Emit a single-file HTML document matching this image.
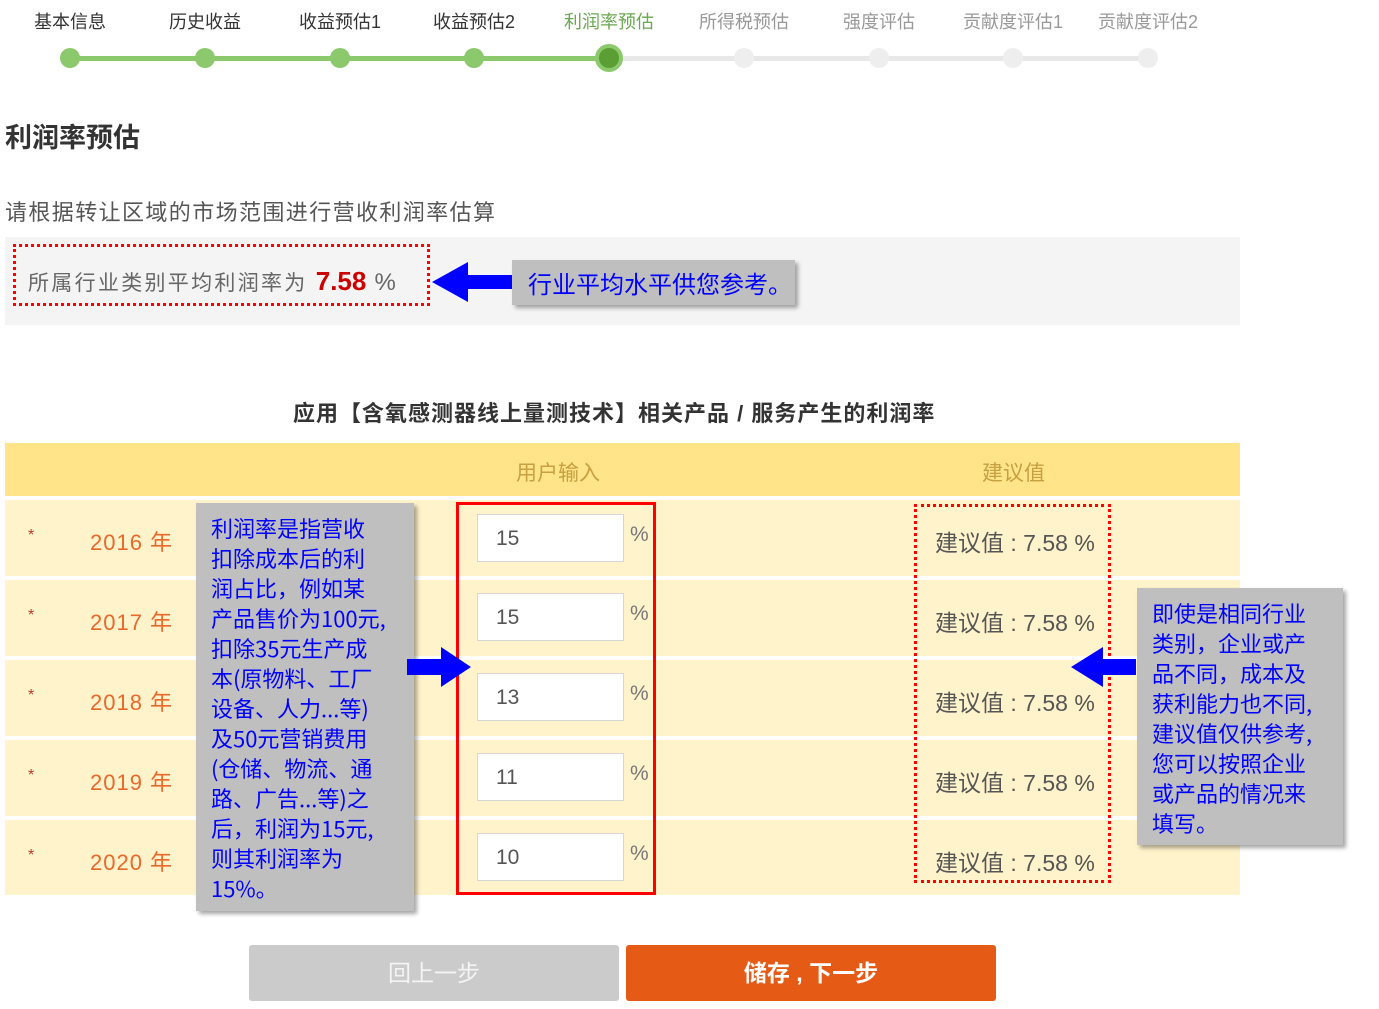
<!DOCTYPE html>
<html><head><meta charset="utf-8"><style>
*{margin:0;padding:0;box-sizing:border-box}
body{width:1379px;height:1009px;background:#fff;position:relative;overflow:hidden;font-family:"Liberation Sans","Noto Sans CJK SC",sans-serif}
.a{position:absolute}
.lab{position:absolute;top:8px;font-size:18px;color:#333;white-space:nowrap;transform:translateX(-50%)}
.dot{position:absolute;top:48px;width:20px;height:20px;border-radius:50%;margin-left:-10px}
.row{position:absolute;left:5px;width:1235px;height:76px;background:#fff3cc}
.yr{position:absolute;left:90px;font-size:22px;color:#e8692a;letter-spacing:1px}
.st{position:absolute;left:28px;font-size:16px;color:#c0392b}
.inp{position:absolute;left:477px;width:147px;height:48px;background:#fff;border:1px solid #d6d6d6;font-size:21px;color:#555;padding:12px 0 0 18px}
.pc{position:absolute;left:630px;font-size:21px;color:#777}
.sug{position:absolute;left:935px;font-size:23px;color:#555;white-space:nowrap}
.call{position:absolute;background:#bfbfbf;color:#0000ff;font-family:"Noto Sans CJK SC","WenQuanYi Zen Hei",sans-serif;box-shadow:3px 3px 4px rgba(0,0,0,.35)}
</style></head><body>
<div class="a" style="left:70px;top:56px;width:540px;height:5px;background:#8cc96c"></div>
<div class="a" style="left:610px;top:56px;width:540px;height:5px;background:#e8e8e8"></div>
<div class="dot" style="left:70px;background:#8cc96c"></div>
<div class="dot" style="left:205px;background:#8cc96c"></div>
<div class="dot" style="left:340px;background:#8cc96c"></div>
<div class="dot" style="left:474px;background:#8cc96c"></div>
<div class="a" style="left:595px;top:44px;width:28px;height:28px;border-radius:50%;background:#5a9e34;border:4px solid #8cc96c"></div>
<div class="dot" style="left:744px;background:#eee"></div>
<div class="dot" style="left:879px;background:#eee"></div>
<div class="dot" style="left:1013px;background:#eee"></div>
<div class="dot" style="left:1148px;background:#eee"></div>
<div class="lab" style="left:70px">基本信息</div>
<div class="lab" style="left:205px">历史收益</div>
<div class="lab" style="left:340px">收益预估1</div>
<div class="lab" style="left:474px">收益预估2</div>
<div class="lab" style="left:609px;color:#6aa84f">利润率预估</div>
<div class="lab" style="left:744px;color:#999">所得税预估</div>
<div class="lab" style="left:879px;color:#999">强度评估</div>
<div class="lab" style="left:1013px;color:#999">贡献度评估1</div>
<div class="lab" style="left:1148px;color:#999">贡献度评估2</div>

<div class="a" style="left:5px;top:116px;font-size:27px;font-weight:bold;color:#333">利润率预估</div>
<div class="a" style="left:5px;top:195px;font-size:22px;letter-spacing:1.4px;color:#555;white-space:nowrap">请根据转让区域的市场范围进行营收利润率估算</div>
<div class="a" style="left:5px;top:237px;width:1235px;height:88px;background:#f4f4f4"></div>
<div class="a" style="left:13px;top:244px;width:417px;height:62px;border:3px dotted #f00"></div>
<div class="a" style="left:28px;top:266px;font-size:21px;letter-spacing:2.3px;color:#666;white-space:nowrap">所属行业类别平均利润率为 <b style="color:#c00;font-size:26px;font-weight:bold;letter-spacing:0">7.58</b> <span style="font-size:24px;letter-spacing:0">%</span></div>
<svg class="a" style="left:428px;top:260px" width="95" height="46"><polygon points="4,22 40,2 40,15 92,15 92,29 40,29 40,42" fill="#0000ff"/></svg>
<div class="call" style="left:512px;top:260px;width:283px;height:45px;font-size:24px;padding:5px 0 0 16px;white-space:nowrap">行业平均水平供您参考。</div>

<div class="a" style="left:293px;top:396px;font-size:22px;letter-spacing:1px;font-weight:bold;color:#333;white-space:nowrap">应用【含氧感测器线上量测技术】相关产品 / 服务产生的利润率</div>
<div class="a" style="left:5px;top:443px;width:1235px;height:53px;background:#ffe48a"></div>
<div class="a" style="left:516px;top:457px;font-size:21px;color:#c8a040">用户输入</div>
<div class="a" style="left:982px;top:457px;font-size:21px;color:#c8a040">建议值</div>

<div class="row" style="top:500px"></div>
<div class="row" style="top:580px"></div>
<div class="row" style="top:660px"></div>
<div class="row" style="top:740px"></div>
<div class="row" style="top:820px;height:75px"></div>

<div class="st" style="top:527px">*</div><div class="yr" style="top:525px">2016 年</div>
<div class="st" style="top:607px">*</div><div class="yr" style="top:605px">2017 年</div>
<div class="st" style="top:687px">*</div><div class="yr" style="top:685px">2018 年</div>
<div class="st" style="top:767px">*</div><div class="yr" style="top:765px">2019 年</div>
<div class="st" style="top:847px">*</div><div class="yr" style="top:845px">2020 年</div>

<div class="inp" style="top:514px">15</div><div class="pc" style="top:523px">%</div>
<div class="inp" style="top:593px">15</div><div class="pc" style="top:602px">%</div>
<div class="inp" style="top:673px">13</div><div class="pc" style="top:682px">%</div>
<div class="inp" style="top:753px">11</div><div class="pc" style="top:762px">%</div>
<div class="inp" style="top:833px">10</div><div class="pc" style="top:842px">%</div>

<div class="sug" style="top:524px">建议值 : 7.58 %</div>
<div class="sug" style="top:604px">建议值 : 7.58 %</div>
<div class="sug" style="top:684px">建议值 : 7.58 %</div>
<div class="sug" style="top:764px">建议值 : 7.58 %</div>
<div class="sug" style="top:844px">建议值 : 7.58 %</div>

<div class="a" style="left:456px;top:502px;width:200px;height:393px;border:3px solid #f00"></div>
<div class="a" style="left:914px;top:504px;width:197px;height:379px;border:3px dotted #f00"></div>

<div class="call" style="left:196px;top:503px;width:218px;height:408px;font-size:22px;line-height:30px;padding:10px 0 0 15px">利润率是指营收<br>扣除成本后的利<br>润占比，例如某<br>产品售价为100元,<br>扣除35元生产成<br>本(原物料、工厂<br>设备、人力...等)<br>及50元营销费用<br>(仓储、物流、通<br>路、广告...等)之<br>后，利润为15元,<br>则其利润率为<br>15%。</div>
<svg class="a" style="left:405px;top:645px" width="70" height="44"><polygon points="2,14 36,14 36,2 66,22 36,42 36,30 2,30" fill="#0000ff"/></svg>
<svg class="a" style="left:1068px;top:645px" width="70" height="44"><polygon points="3,22 35,2 35,14 68,14 68,30 35,30 35,42" fill="#0000ff"/></svg>
<div class="call" style="left:1137px;top:588px;width:206px;height:257px;font-size:22px;line-height:30px;padding:10px 0 0 15px">即使是相同行业<br>类别，企业或产<br>品不同，成本及<br>获利能力也不同,<br>建议值仅供参考,<br>您可以按照企业<br>或产品的情况来<br>填写。</div>

<div class="a" style="left:249px;top:945px;width:370px;height:56px;background:#cbcbcb;border-radius:3px;color:#f4f4f4;font-size:23px;text-align:center;line-height:56px">回上一步</div>
<div class="a" style="left:626px;top:945px;width:370px;height:56px;background:#e55a15;border-radius:3px;color:#fff;font-size:23px;text-align:center;line-height:56px;font-weight:bold">储存 , 下一步</div>
</body></html>
